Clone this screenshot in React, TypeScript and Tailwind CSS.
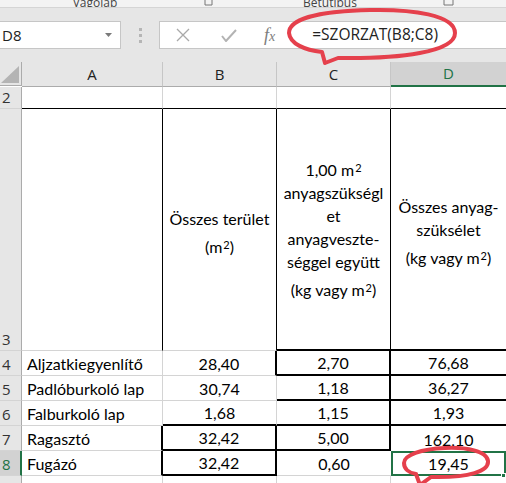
import React from 'react'

type Edge = 'g' | 'k' | 'K' | 'n'

const rightCls: Record<Edge, string> = {
  g: 'border-r border-r-[#d4d4d4]',
  k: 'border-r border-r-black',
  K: 'border-r-2 border-r-black',
  n: 'border-r-0',
}

const bottomCls: Record<Edge, string> = {
  g: 'border-b border-b-[#d4d4d4]',
  k: 'border-b border-b-black',
  K: 'border-b-2 border-b-black',
  n: 'border-b-0',
}

function Cell({
  r,
  b,
  align = 'center',
  className = '',
  children,
}: {
  r: Edge
  b: Edge
  align?: 'left' | 'center'
  className?: string
  children?: React.ReactNode
}) {
  return (
    <div
      className={`relative flex items-end pb-[1px] ${align === 'left' ? 'justify-start pl-[5px]' : 'justify-center'} ${rightCls[r]} ${bottomCls[b]} ${className}`}
    >
      {children}
    </div>
  )
}

function RowHead({ n, active = false }: { n?: string; active?: boolean }) {
  return (
    <div
      className={`flex items-end pb-[1px] pl-[2px] text-[15px] leading-[20px] ${
        active
          ? 'bg-[#d2d2d2] text-[#217346] border-r-2 border-r-[#217346]'
          : 'bg-[#e6e6e6] text-[#333] border-r border-r-[#ababab]'
      } border-b border-b-[#d4d4d4]`}
      style={{ fontFamily: '"Open Sans", sans-serif' }}
    >
      {n}
    </div>
  )
}

function ColHead({ l, active = false }: { l: string; active?: boolean }) {
  return (
    <div
      className={`flex items-center justify-center text-[15px] ${
        active
          ? 'bg-[#d2d2d2] text-[#217346] border-b-2 border-b-[#217346]'
          : 'bg-[#e6e6e6] text-[#222] border-b border-b-[#ababab] border-r border-r-[#c6c6c6]'
      }`}
    >
      {l}
    </div>
  )
}

const Sq = () => <sup className="text-[11px] relative -top-[4px] ml-[1px]">2</sup>

type RowDef = {
  n: string
  cells: { r: Edge; b: Edge; v?: string }[]
}

const rows: RowDef[] = [
  {
    n: '4',
    cells: [
      { r: 'g', b: 'g', v: 'Aljzatkiegyenlítő' },
      { r: 'K', b: 'g', v: '28,40' },
      { r: 'K', b: 'K', v: '2,70' },
      { r: 'n', b: 'K', v: '76,68' },
    ],
  },
  {
    n: '5',
    cells: [
      { r: 'g', b: 'g', v: 'Padlóburkoló lap' },
      { r: 'g', b: 'g', v: '30,74' },
      { r: 'K', b: 'K', v: '1,18' },
      { r: 'n', b: 'K', v: '36,27' },
    ],
  },
  {
    n: '6',
    cells: [
      { r: 'g', b: 'g', v: 'Falburkoló lap' },
      { r: 'g', b: 'K', v: '1,68' },
      { r: 'K', b: 'K', v: '1,15' },
      { r: 'n', b: 'K', v: '1,93' },
    ],
  },
  {
    n: '7',
    cells: [
      { r: 'K', b: 'g', v: 'Ragasztó' },
      { r: 'K', b: 'K', v: '32,42' },
      { r: 'K', b: 'K', v: '5,00' },
      { r: 'n', b: 'n', v: '162,10' },
    ],
  },
]

export default function App() {
  return (
    <div
      className="relative w-[506px] h-[483px] overflow-hidden bg-white text-black"
      style={{ fontFamily: '"Open Sans", sans-serif' }}
    >
      {/* ribbon remnant */}
      <div className="h-[8px] bg-[#f3f3f3] border-b border-b-[#d5d5d5] overflow-hidden flex text-[12px] leading-[12px] text-[#444]">
        <div className="w-[190px] flex justify-center -mt-[3px]">Vágólap</div>
        <div className="w-[30px] flex items-end">
          <svg width="9" height="7" viewBox="0 0 9 7" className="ml-[14px]">
            <path d="M1 0v5h7V0" fill="none" stroke="#777" strokeWidth="1" />
          </svg>
        </div>
        <div className="w-[220px] flex justify-center -mt-[3px]">Betűtípus</div>
        <div className="w-[20px] flex items-end">
          <svg width="12" height="7" viewBox="0 0 12 7" className="ml-[3px]">
            <path d="M1 0v5h9V0" fill="none" stroke="#777" strokeWidth="1" />
          </svg>
        </div>
      </div>

      {/* formula bar */}
      <div className="h-[54px] bg-[#e6e6e6] flex items-center">
        <div className="w-[121px] h-[28px] bg-white border border-l-0 border-[#c6c6c6] flex items-center justify-between pl-[2px] pr-[8px]">
          <span className="text-[15px] text-[#222]">D8</span>
          <svg width="7" height="4" viewBox="0 0 7 4">
            <path d="M0 0h7L3.5 4z" fill="#7a7a7a" />
          </svg>
        </div>
        <div className="w-[38px] flex justify-center">
          <div className="flex flex-col gap-[3px]">
            <div className="w-[3px] h-[3px] bg-[#b5b5b5]" />
            <div className="w-[3px] h-[3px] bg-[#b5b5b5]" />
            <div className="w-[3px] h-[3px] bg-[#b5b5b5]" />
          </div>
        </div>
        <div className="flex-1 h-[28px] bg-white border border-r-0 border-[#c6c6c6] flex items-center">
          <svg width="14" height="14" viewBox="0 0 14 14" className="ml-[16px]">
            <path d="M1 1l12 12M13 1L1 13" stroke="#a9a9a9" strokeWidth="1.3" />
          </svg>
          <svg width="16" height="13" viewBox="0 0 16 13" className="ml-[31px]">
            <path d="M1 7l4 5L15 1" fill="none" stroke="#b3b3b3" strokeWidth="2" />
          </svg>
          <span
            className="ml-[27px] text-[18px] italic text-[#7d7d7d]"
            style={{ fontFamily: '"Liberation Serif", serif' }}
          >
            f<span className="text-[14px]">x</span>
          </span>
          <span className="ml-[37px] text-[15.5px] text-[#222]">=SZORZAT(B8;C8)</span>
        </div>
      </div>

      {/* sheet */}
      <div className="grid grid-cols-[22px_141px_114px_114px_115px]">
        <div className="h-[24px] bg-[#e6e6e6] border-b border-b-[#ababab] border-r border-r-[#ababab] flex items-end justify-end pr-[2px] pb-[2px]">
          <svg width="18" height="17" viewBox="0 0 18 17">
            <path d="M18 0v17H0z" fill="#b4b4b4" />
          </svg>
        </div>
        <ColHead l="A" />
        <ColHead l="B" />
        <ColHead l="C" />
        <ColHead l="D" active />
      </div>

      <div
        className="grid grid-cols-[22px_141px_114px_114px_115px] text-[16px] leading-[21px]"
        style={{ fontFamily: 'Lato, "Open Sans", sans-serif' }}
      >
        {/* row 2 */}
        <div className="h-[22px] grid">
          <RowHead n="2" />
        </div>
        <Cell r="g" b="k" />
        <Cell r="g" b="k" />
        <Cell r="g" b="k" />
        <Cell r="n" b="k" />

        {/* row 3 */}
        <div className="h-[242px] grid">
          <RowHead n="3" />
        </div>
        <Cell r="k" b="g" />
        <div className="flex items-center justify-center text-center border-r border-r-black border-b border-b-[#d4d4d4] pt-[6px]">
          <div className="leading-[23px]">
            <div>Összes terület</div>
            <div className="pt-[5px]">
              (m<Sq />)
            </div>
          </div>
        </div>
        <div className="flex items-center justify-center text-center border-r border-r-black border-b-2 border-b-black">
          <div className="leading-[23px]">
            <div className="pt-[2px]">
              1,00 m<Sq />
            </div>
            <div>anyagszükségl</div>
            <div>et</div>
            <div>anyagveszte-</div>
            <div>séggel együtt</div>
            <div className="pt-[5px]">
              (kg vagy m<Sq />)
            </div>
          </div>
        </div>
        <div className="flex items-center justify-center text-center border-b-2 border-b-black pt-[6px]">
          <div className="leading-[23px]">
            <div>Összes anyag-</div>
            <div>szüksélet</div>
            <div className="pt-[5px]">
              (kg vagy m<Sq />)
            </div>
          </div>
        </div>

        {/* rows 4-7 */}
        {rows.map((row) => (
          <React.Fragment key={row.n}>
            <div className="h-[25px] grid">
              <RowHead n={row.n} />
            </div>
            {row.cells.map((c, i) => (
              <Cell key={i} r={c.r} b={c.b} align={i === 0 ? 'left' : 'center'}>
                {c.v}
              </Cell>
            ))}
          </React.Fragment>
        ))}

        {/* row 8 */}
        <div className="h-[25px] grid">
          <RowHead n="8" active />
        </div>
        <Cell r="K" b="g" align="left">
          Fugázó
        </Cell>
        <Cell r="K" b="K">
          32,42
        </Cell>
        <Cell r="n" b="g">
          0,60
        </Cell>
        <div className="relative flex items-end justify-center pb-[0px] border-2 border-[#217346]">
          19,45
          <div className="absolute -right-[2px] -bottom-[4px] w-[5px] h-[5px] bg-[#217346] border border-white" />
        </div>

        {/* row 9 */}
        <div className="h-[20px] grid">
          <RowHead />
        </div>
        <Cell r="g" b="g" />
        <Cell r="g" b="g" />
        <Cell r="g" b="g" />
        <Cell r="n" b="g" />
      </div>

      {/* red hand-drawn annotations */}
      <svg
        className="absolute left-0 top-0 pointer-events-none"
        width="506"
        height="483"
        viewBox="0 0 506 483"
      >
        <path
          d="M322 52 L325 63 L338 58 C400 59 455 52 455 33 C455 15 412 9 370 10 C322 11 289 18 289 33 C290 44 305 50 322 52"
          fill="none"
          stroke="#e5404c"
          strokeWidth="4"
          strokeLinejoin="round"
          strokeLinecap="round"
        />
        <path
          d="M416 474 L420 485 L431 477 C470 478 489 471 488 461 C487 451 466 447 445 448 C421 449 404 455 404 463 C404 469 409 473 416 474"
          fill="none"
          stroke="#e5404c"
          strokeWidth="4"
          strokeLinejoin="round"
          strokeLinecap="round"
        />
      </svg>
    </div>
  )
}
